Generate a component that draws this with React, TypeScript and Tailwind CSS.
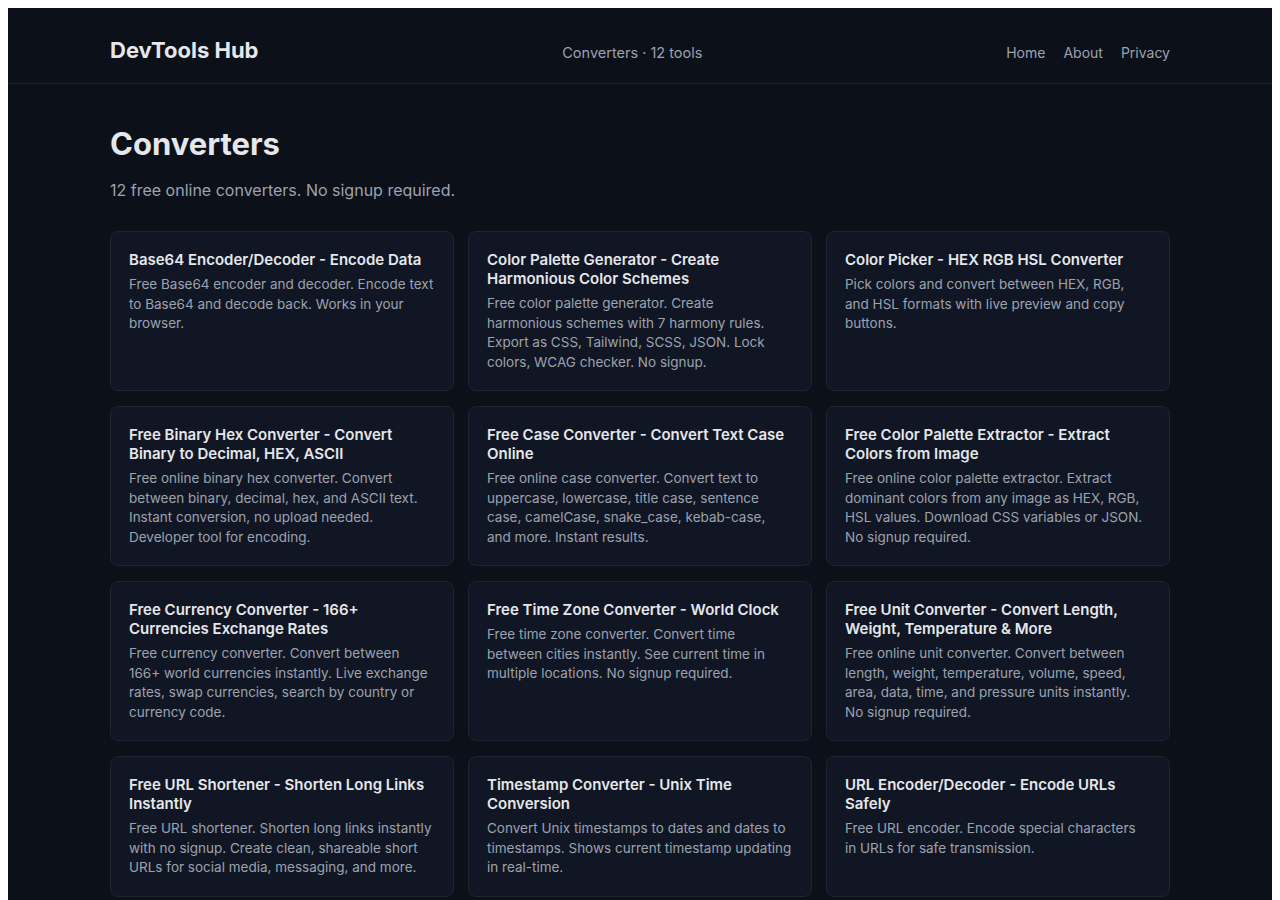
import React from "react";

interface Tool {
  title: string;
  desc: string;
}

// descriptions keep the line breaks of the original layout
const tools: Tool[] = [
  {
    title: "Base64 Encoder/Decoder - Encode Data",
    desc: "Free Base64 encoder and decoder. Encode text\nto Base64 and decode back. Works in your\nbrowser.",
  },
  {
    title: "Color Palette Generator - Create Harmonious Color Schemes",
    desc: "Free color palette generator. Create\nharmonious schemes with 7 harmony rules.\nExport as CSS, Tailwind, SCSS, JSON. Lock\ncolors, WCAG checker. No signup.",
  },
  {
    title: "Color Picker - HEX RGB HSL Converter",
    desc: "Pick colors and convert between HEX, RGB,\nand HSL formats with live preview and copy\nbuttons.",
  },
  {
    title: "Free Binary Hex Converter - Convert Binary to Decimal, HEX, ASCII",
    desc: "Free online binary hex converter. Convert\nbetween binary, decimal, hex, and ASCII text.\nInstant conversion, no upload needed.\nDeveloper tool for encoding.",
  },
  {
    title: "Free Case Converter - Convert Text Case Online",
    desc: "Free online case converter. Convert text to\nuppercase, lowercase, title case, sentence\ncase, camelCase, snake_case, kebab-case,\nand more. Instant results.",
  },
  {
    title: "Free Color Palette Extractor - Extract Colors from Image",
    desc: "Free online color palette extractor. Extract\ndominant colors from any image as HEX, RGB,\nHSL values. Download CSS variables or JSON.\nNo signup required.",
  },
  {
    title: "Free Currency Converter - 166+ Currencies Exchange Rates",
    desc: "Free currency converter. Convert between\n166+ world currencies instantly. Live exchange\nrates, swap currencies, search by country or\ncurrency code.",
  },
  {
    title: "Free Time Zone Converter - World Clock",
    desc: "Free time zone converter. Convert time\nbetween cities instantly. See current time in\nmultiple locations. No signup required.",
  },
  {
    title: "Free Unit Converter - Convert Length, Weight, Temperature & More",
    desc: "Free online unit converter. Convert between\nlength, weight, temperature, volume, speed,\narea, data, time, and pressure units instantly.\nNo signup required.",
  },
  {
    title: "Free URL Shortener - Shorten Long Links Instantly",
    desc: "Free URL shortener. Shorten long links instantly\nwith no signup. Create clean, shareable short\nURLs for social media, messaging, and more.",
  },
  {
    title: "Timestamp Converter - Unix Time Conversion",
    desc: "Convert Unix timestamps to dates and dates to\ntimestamps. Shows current timestamp updating\nin real-time.",
  },
  {
    title: "URL Encoder/Decoder - Encode URLs Safely",
    desc: "Free URL encoder. Encode special characters\nin URLs for safe transmission.",
  },
];

export default function App() {
  return (
    <div className="min-h-screen bg-white p-2 font-['Inter','Noto_Sans',sans-serif]">
      <div className="min-h-[900px] bg-[#0c1019] text-gray-200">
        {/* Header */}
        <header className="border-b border-[#1c2130]">
          <div className="mx-auto flex max-w-[1060px] items-baseline justify-between pt-[28px] pb-[19px]">
            <a className="text-[22px] font-bold leading-[28px] text-[#e5e7eb]">DevTools Hub</a>
            <span className="text-[14.5px] text-[#9ca3af]">Converters · 12 tools</span>
            <nav className="flex gap-[18px] text-[14px] text-[#9ca3af]">
              <a>Home</a>
              <a>About</a>
              <a>Privacy</a>
            </nav>
          </div>
        </header>

        {/* Main */}
        <main className="mx-auto max-w-[1060px] pt-10">
          <h1 className="text-[31px] font-bold leading-[40px] text-[#e5e7eb]">Converters</h1>
          <p className="mt-[14px] text-base leading-6 text-[#9ca3af]">
            12 free online converters. No signup required.
          </p>

          <div className="mt-[29px] grid grid-cols-3 gap-x-[14px] gap-y-[15px]">
            {tools.map((t) => (
              <a
                key={t.title}
                className="block rounded-lg border border-[#1d2433] bg-[#111624] p-[18px]"
              >
                <h2 className="text-[15px] font-semibold leading-[19px] text-[#e5e7eb]">{t.title}</h2>
                <p className="mt-1.5 text-[13.5px] leading-[19.5px] text-[#9ca3af]">
                  {t.desc.split("\n").map((line) => (
                    <span key={line} className="block whitespace-nowrap">
                      {line}
                    </span>
                  ))}
                </p>
              </a>
            ))}
          </div>
        </main>
      </div>
    </div>
  );
}
